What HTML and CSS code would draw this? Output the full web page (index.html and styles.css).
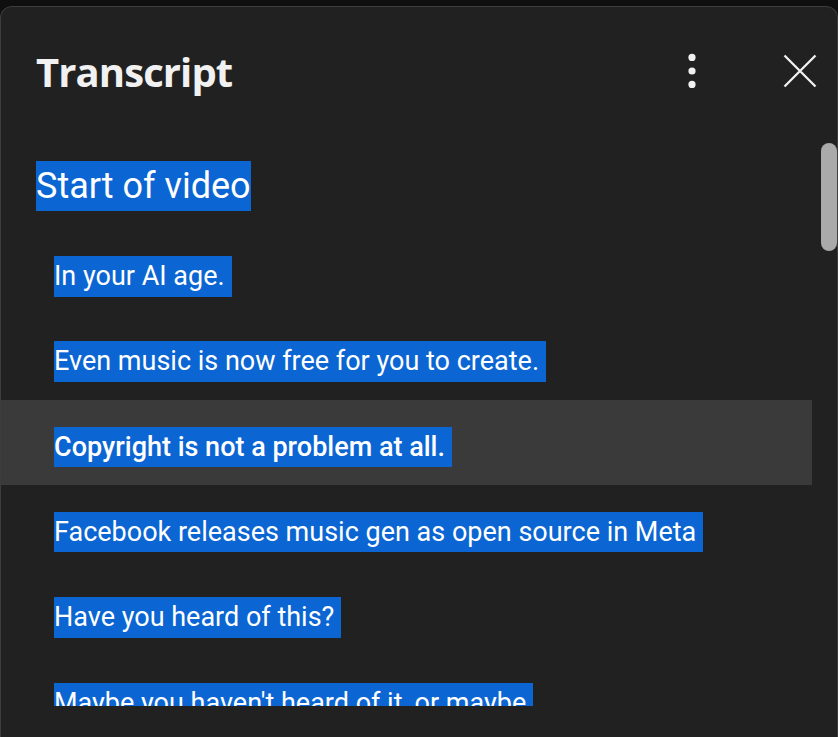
FILE: index.html
```html
<html lang="en">
  <head>
    <meta charset="UTF-8" />
    <meta name="viewport" content="width=device-width, initial-scale=1.0" />
    <title>Transcript</title>
    <link rel="stylesheet" href="styles.css">
  </head>
  <body>
    <div class="panel">
      <div class="header">
        <h2 class="title">Transcript</h2>
        <div class="actions">
          <span class="icon-btn">
            <svg width="48" height="48" viewBox="0 0 48 48">
              <circle cx="24" cy="10.4" r="3.6" fill="#f1f1f1" />
              <circle cx="24" cy="24" r="3.6" fill="#f1f1f1" />
              <circle cx="24" cy="37.4" r="3.6" fill="#f1f1f1" />
            </svg>
          </span>
          <span class="icon-btn">
            <svg width="48" height="48" viewBox="0 0 48 48">
              <path d="M8.5 8.5 L39.5 39.5 M39.5 8.5 L8.5 39.5" stroke="#f1f1f1" stroke-width="2.3" fill="none" />
            </svg>
          </span>
        </div>
      </div>
      <div class="body">
        <div class="segments">
          <div class="chapter"><span class="sel">Start of video</span></div>
          <div class="segment"><span class="sel">In your AI age.</span></div>
          <div class="segment"><span class="sel">Even music is now free for you to create.</span></div>
          <div class="segment active"><span class="sel">Copyright is not a problem at all.</span></div>
          <div class="segment"><span class="sel">Facebook releases music gen as open source in Meta</span></div>
          <div class="segment"><span class="sel">Have you heard of this?</span></div>
          <div class="segment"><span class="sel">Maybe you haven't heard of it, or maybe</span></div>
        </div>
        <div class="scrollbar"><div class="thumb"></div></div>
      </div>
    </div>
  </body>
</html>
```

FILE: styles.css
```css
body {
  margin: 0;
  background-color: #0f0f0f;
  overflow: hidden;
  font-family: Roboto, "Liberation Sans", sans-serif;
}
.panel {
  margin-top: 6px;
  height: 731px;
  background-color: #212121;
  border: 1px solid #3d3d3d;
  border-bottom: none;
  border-radius: 12px 12px 0 0;
  box-sizing: border-box;
}
.header {
  height: 128px;
  display: flex;
  align-items: center;
  justify-content: space-between;
  padding: 0 13px 0 35px;
}
.title {
  margin: 0;
  font-family: "Open Sans", "DejaVu Sans", sans-serif;
  font-weight: 700;
  font-size: 40px;
  letter-spacing: -0.9px;
  color: #f1f1f1;
}
.actions {
  display: flex;
  align-items: center;
  gap: 60px;
}
.icon-btn {
  width: 48px;
  height: 48px;
  display: block;
  cursor: pointer;
}
.body {
  height: 571px;
  display: flex;
}
.segments {
  flex: 1;
  overflow: hidden;
}
.sel {
  display: inline-block;
  background-color: #0b65d2;
  color: #ffffff;
}
.chapter {
  padding: 26px 0 18px 35px;
}
.chapter .sel {
  font-size: 36px;
  line-height: 50px;
}
.segment {
  height: 85.333px;
  box-sizing: border-box;
  padding: 27px 0 0 53px;
}
.segment .sel {
  font-size: 27px;
  line-height: 40.5px;
  padding-right: 7px;
}
.segment.active {
  background-color: #3a3a3a;
}
.segment.active .sel {
  font-weight: 500;
}
.scrollbar {
  width: 25px;
}
.thumb {
  margin: 8px 0 0 9px;
  width: 16px;
  height: 108px;
  border-radius: 8px;
  background-color: #aaaaaa;
}
```
